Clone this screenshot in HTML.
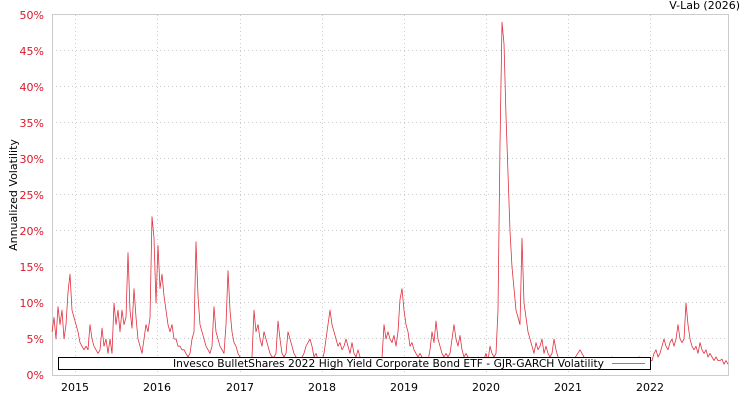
<!DOCTYPE html><html><head><style>body{margin:0;background:#fff}svg{display:block;font-family:"DejaVu Sans","Liberation Sans",sans-serif}</style></head><body>
<svg width="750" height="400" xmlns="http://www.w3.org/2000/svg">
<rect width="750" height="400" fill="#fff"/>
<g stroke="#ccc" stroke-width="1" stroke-dasharray="1,3">
<line x1="52" x2="728" y1="338.5" y2="338.5"/><line x1="52" x2="728" y1="302.5" y2="302.5"/><line x1="52" x2="728" y1="266.5" y2="266.5"/><line x1="52" x2="728" y1="230.5" y2="230.5"/><line x1="52" x2="728" y1="194.5" y2="194.5"/><line x1="52" x2="728" y1="158.5" y2="158.5"/><line x1="52" x2="728" y1="122.5" y2="122.5"/><line x1="52" x2="728" y1="86.5" y2="86.5"/><line x1="52" x2="728" y1="50.5" y2="50.5"/>
<line y1="15" y2="375" x1="75.5" x2="75.5"/><line y1="15" y2="375" x1="157.5" x2="157.5"/><line y1="15" y2="375" x1="240.5" x2="240.5"/><line y1="15" y2="375" x1="322.5" x2="322.5"/><line y1="15" y2="375" x1="404.5" x2="404.5"/><line y1="15" y2="375" x1="486.5" x2="486.5"/><line y1="15" y2="375" x1="568.5" x2="568.5"/><line y1="15" y2="375" x1="650.5" x2="650.5"/>
</g>
<rect x="52.5" y="14.5" width="676" height="361" fill="none" stroke="#ccc"/>
<g transform="translate(0,375) scale(1,-7.2)">
<polyline fill="none" stroke="#e0303f" stroke-width="0.8" vector-effect="non-scaling-stroke" stroke-linejoin="round" points="52,6 54,8 56,5 58,9.5 60,7 62,9 64,5 66,7 68,11.5 70,14 72,9 74,8 76,7 78,6 80,4.5 82,4 84,3.5 86,4 88,3.5 90,7 92,5 94,4 96,3.5 98,3 100,3.5 102,6.5 104,4 106,5 108,3 110,5 112,3 114,10 116,7 118,9 120,6 122,9 124,7 126,8 128,17 130,9 132,6.5 134,12 136,8 138,5 140,4 142,3 144,5 146,7 148,6 150,8 152,22 154,19 156,10 158,18 160,12 162,14 164,11 166,9 168,7 170,6 172,7 174,5 176,5 178,4 180,4 182,3.5 184,3.5 186,3 188,2.5 190,3 192,5 194,6 196,18.5 198,11 200,7 202,6 204,5 206,4 208,3.5 210,3 212,4 214,9.5 216,6 218,5 220,4 222,3.5 224,3 226,7 228,14.5 230,9 232,6 234,4.5 236,4 238,3 240,2.5 242,2 244,2 246,2.2 248,2 250,2 252,2.5 254,9 256,6 258,7 260,5 262,4 264,6 266,5 268,4 270,3 272,2.5 274,2.5 276,3 278,7.5 280,5 282,3 284,2.5 286,3 288,6 290,5 292,4 294,3 296,2.5 298,2 300,2 302,2.5 304,3 306,4 308,4.5 310,5 312,4 314,2.5 316,3 318,2.2 320,2 322,2 324,3 326,5 328,7 330,9 332,7 334,6 336,5 338,4 340,4.5 342,3.5 344,4 346,5 348,4 350,3 352,4.5 354,3 356,2.5 358,3.5 360,2.5 362,2 366,2.3 370,2 374,2.4 378,2.1 382,2.3 384,7 386,5 388,6 390,5 392,4.5 394,5.5 396,4 398,6 400,10.5 402,12 404,9 406,7 408,6 410,4 412,4.5 414,3.5 416,3 418,2.5 420,3 422,2.5 424,2.2 426,2.5 428,2 430,3.5 432,6 434,4.5 436,7.5 438,5 440,4 442,3 444,2.5 446,3 448,2.5 450,3 452,5 454,7 456,5 458,4 460,5.5 462,3.5 464,2.5 466,3 468,2.5 470,2 472,2 474,2.2 476,2 478,2.5 480,2 482,2 484,2.2 486,3 488,2 490,4 492,3 494,2.5 496,3 498,9 500,32 502,49 504,46 506,36 508,28 510,20 512,15 514,12 516,9 518,8 520,7 522,19 524,10 526,8 528,6 530,5 532,4 534,3 536,4.5 538,3.5 540,4 542,5 544,3 546,4 548,3 550,2.5 552,3 554,5 556,3.5 558,2.5 560,2 565,2.3 570,2 575,2.4 580,3.5 582,3 584,2.5 586,2 595,2.2 605,2 612,2.5 614,2 625,2.2 640,2.5 642,2 652,2 654,3 656,3.5 658,2.5 660,3 662,4 664,5 666,4 668,3.5 670,4.5 672,5 674,4 676,5 678,7 680,5 682,4.5 684,5 686,10 688,7 690,5 692,4 694,3.5 696,4 698,3 700,4.5 702,3.5 704,3 706,3.5 708,2.5 710,3 712,2.5 714,2 716,2.5 718,2 720,2 722,2.2 724,1.5 726,2 728,1.5"/>
</g>
<rect x="58.5" y="357.5" width="592" height="12" fill="#fff" stroke="#000"/>
<text x="173" y="367" font-size="11" textLength="431" lengthAdjust="spacingAndGlyphs" fill="#000">Invesco BulletShares 2022 High Yield Corporate Bond ETF - GJR-GARCH Volatility</text>
<line x1="612" x2="645" y1="363.5" y2="363.5" stroke="#888"/>
<g font-size="11" fill="#d8192c" text-anchor="end">
<text x="44" y="379">0%</text><text x="44" y="343">5%</text><text x="44" y="307">10%</text><text x="44" y="271">15%</text><text x="44" y="235">20%</text><text x="44" y="199">25%</text><text x="44" y="163">30%</text><text x="44" y="127">35%</text><text x="44" y="91">40%</text><text x="44" y="55">45%</text><text x="44" y="19">50%</text>
</g>
<g font-size="11" fill="#000" text-anchor="middle">
<text x="75" y="391">2015</text><text x="157" y="391">2016</text><text x="240" y="391">2017</text><text x="322" y="391">2018</text><text x="404" y="391">2019</text><text x="486" y="391">2020</text><text x="568" y="391">2021</text><text x="650" y="391">2022</text>
</g>
<text x="740" y="9" font-size="11" text-anchor="end" fill="#000">V-Lab (2026)</text>
<text transform="translate(17,195) rotate(-90)" font-size="11" text-anchor="middle" fill="#000">Annualized Volatility</text>
</svg>
</body></html>
